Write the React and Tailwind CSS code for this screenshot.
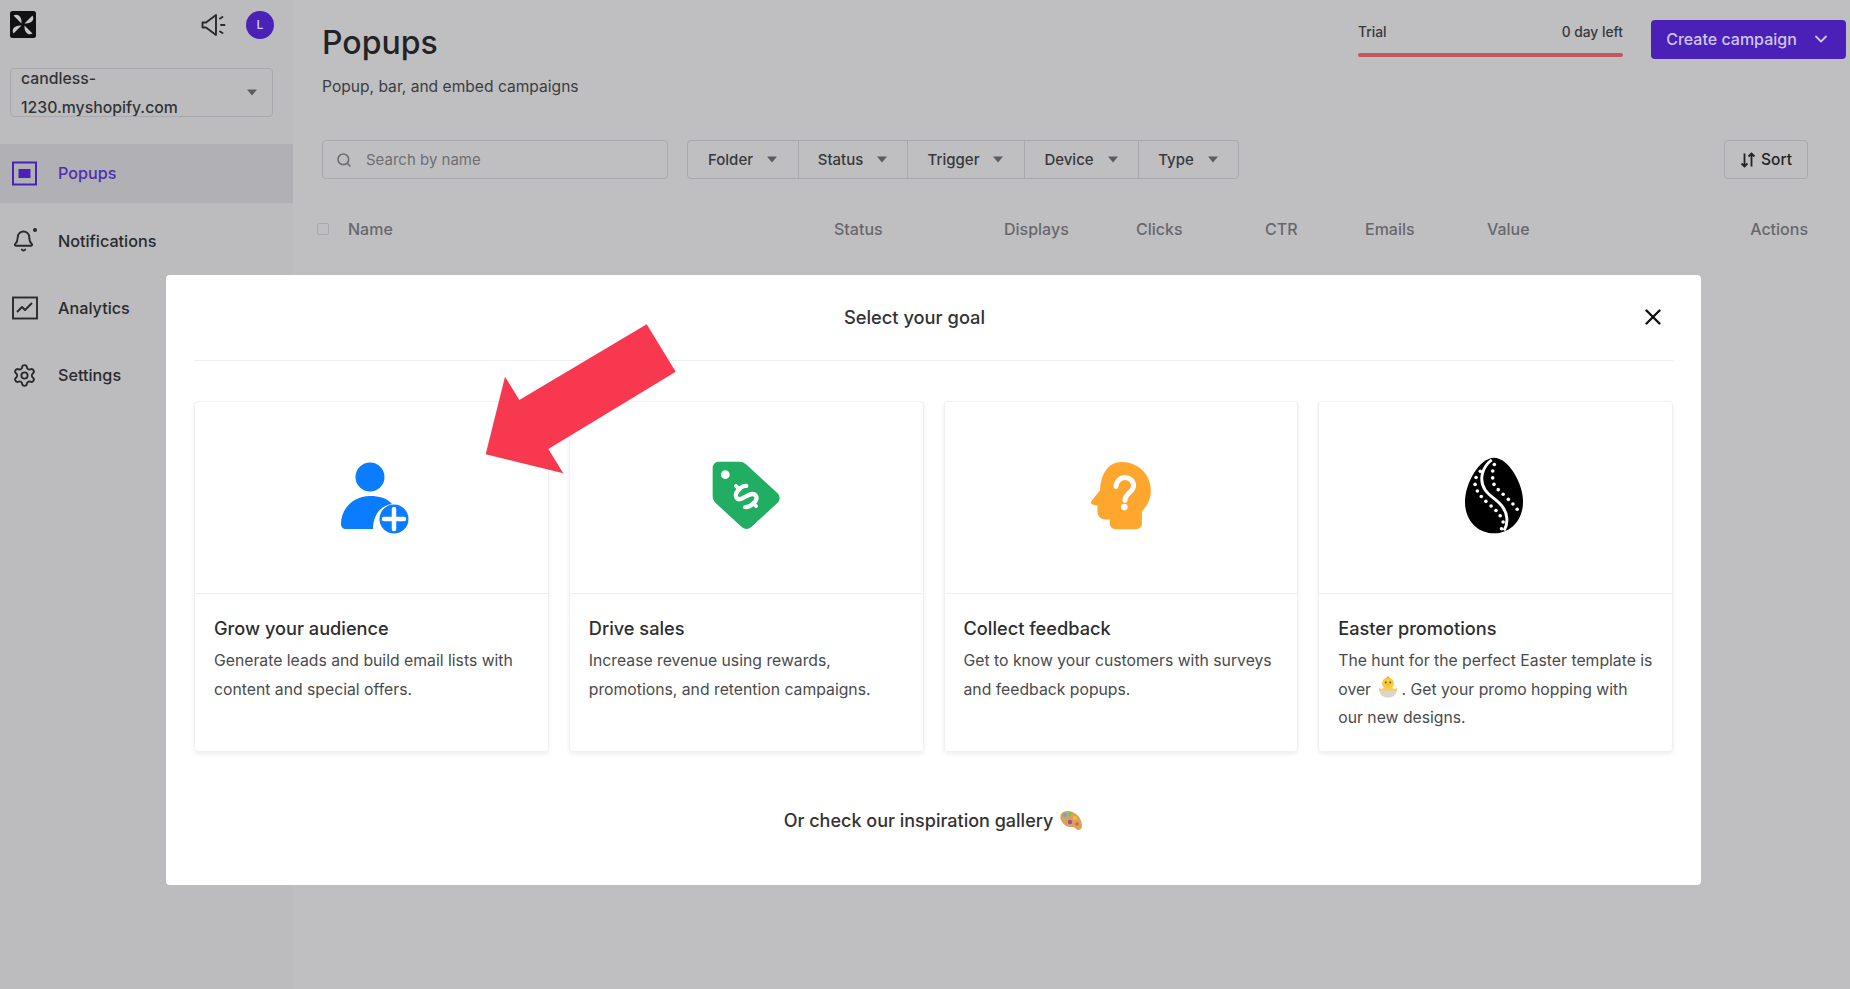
import React from "react";
import { Search, X, ChevronDown, Settings, Bell } from "lucide-react";

const filters = [
  { label: "Folder", width: "w-[110px]" },
  { label: "Status", width: "w-[109px]" },
  { label: "Trigger", width: "w-[117px]" },
  { label: "Device", width: "w-[114px]" },
  { label: "Type", width: "w-[100px]" },
];

const columns = ["Name", "Status", "Displays", "Clicks", "CTR", "Emails", "Value"];

function Caret({ className }) {
  return (
    <svg viewBox="0 0 12 7" className={className}>
      <path d="M1 .5h10L6 6.5z" fill="currentColor" />
    </svg>
  );
}

function Logo() {
  return (
    <svg viewBox="0 0 26 27" className="h-[27px] w-[26px]">
      <rect width="26" height="27" rx="2.5" fill="#111114" />
      <g fill="#c8c8ca">
        <path d="M11.500 12.500 3.500 4.500c4-2.500 8.500 1 8 8z" />
        <path d="M14.500 12.500l8-8c2.500 4-1 8.500-8 8z" />
        <path d="M11.500 14.500l-8 8c-2.500-4 1-8.500 8-8z" />
        <path d="M14.500 14.500l8 8c-4 2.500-8.500-1-8-8z" />
      </g>
    </svg>
  );
}

function Speaker() {
  return (
    <svg viewBox="0 0 26 24" className="h-[24px] w-[26px]" fill="none" stroke="#2a2a2d" strokeWidth="1.9">
      <path d="M1.500 9.500v5h3.500L15 22V2L5 9.500z" strokeLinejoin="round" />
      <path d="M19 5.500l2.500-1.500M20 12h3.500M19 18.500l2.500 1.500" strokeLinecap="round" />
    </svg>
  );
}

function PopupsIcon() {
  return (
    <svg viewBox="0 0 25 25" className="h-[25px] w-[25px]" fill="none">
      <rect x="1" y="1.500" width="23" height="22" stroke="#4a22b8" strokeWidth="2" />
      <rect x="6.500" y="8" width="12" height="9" fill="#4a22b8" />
    </svg>
  );
}

function AnalyticsIcon() {
  return (
    <svg viewBox="0 0 26 24" className="h-[24px] w-[26px]" fill="none" stroke="#2a2a2d" strokeWidth="1.900">
      <rect x="1" y="1.500" width="24" height="21" />
      <path d="M5 16l5-5 3 3 7-7" strokeLinejoin="round" />
    </svg>
  );
}

function PersonIcon() {
  return (
    <svg viewBox="0 0 70 73" className="ml-[8px] mt-[2px] h-[73px] w-[70px]">
      <circle cx="30" cy="15" r="14.500" fill="#0a7cff" />
      <path d="M1 62c0-16 13-28 29-28 9 0 17 2 22 8-11 1-19 11-19 25H6c-3 0-5-2-5-5z" fill="#0a7cff" />
      <circle cx="54" cy="57" r="14.500" fill="#0a7cff" />
      <path d="M54 47v20M44 57h20" stroke="#fff" strokeWidth="4.500" strokeLinecap="round" />
    </svg>
  );
}

function TagIcon() {
  return (
    <svg viewBox="95 92 204 204" className="-mt-[5px] h-[68px] w-[68px]">
      <path d="M115 94h62c8 0 14 2 20 8l94 86c9 9 9 22 0 30l-78 72c-9 8-20 8-29 0l-78-72c-6-6-9-12-9-20V112c0-10 8-18 18-18z" fill="#21ad62" />
      <circle cx="135" cy="133" r="13" fill="#fff" />
      <g transform="rotate(-45 197 197)" fill="none" stroke="#fff" strokeWidth="13" strokeLinecap="round">
        <path d="M219 176c-8-11-44-12-46 6-2 19 48 12 46 34-2 17-37 15-47 3" />
        <path d="M197 154v10M197 230v10" strokeWidth="11" />
      </g>
    </svg>
  );
}

function HeadIcon() {
  return (
    <svg viewBox="92 90 186 208" className="-mt-[4px] h-[69px] w-[62px]">
      <path d="M187 93c50 0 88 38 88 86 0 28-12 47-27 63v36c0 11-8 18-18 18h-61c-10 0-18-8-18-18v-12h-13c-14 0-24-10-24-24v-18c-9 0-15-2-18-5-3-4-1-8 3-12l23-29c2-52 26-85 65-85z" fill="#ffa62e" />
      <path d="M170 167c0-15 12-27 27-27 14 0 26 10 26 24 0 21-26 22-26 45" fill="none" stroke="#fff" strokeWidth="15" strokeLinecap="round" />
      <circle cx="195" cy="229" r="10" fill="#fff" />
    </svg>
  );
}

function EggIcon() {
  const dots = [
    [195, 101], [190, 121], [190, 142], [194, 162], [207, 178], [222, 192], [238, 208], [252, 222], [265, 238],
    [152, 122], [139, 141], [136, 162], [143, 182], [155, 199], [169, 214], [185, 228], [200, 242], [213, 258], [222, 277], [217, 298],
  ];
  return (
    <svg viewBox="103 78 182 236" className="-ml-[3px] -mt-[4px] h-[77px] w-[60px]">
      <path d="M194 80c44 0 89 78 89 135 0 58-40 97-89 97-50 0-89-39-89-97 0-57 45-135 89-135z" fill="#000" />
      <path d="M187 87c-30 22-40 62-20 92 12 18 36 30 52 50 16 21 20 50 6 74" fill="none" stroke="#fff" strokeWidth="9" />
      {dots.map(([x, y]) => (
        <circle key={`${x}-${y}`} cx={x} cy={y} r="5.500" fill="#fff" />
      ))}
    </svg>
  );
}

function ChickEmoji() {
  return (
    <svg viewBox="0 0 22 24" className="mx-[3px] inline-block h-[22px] w-[20px] align-[-3px]">
      <circle cx="11" cy="8" r="6.500" fill="#fbc93a" />
      <path d="M9 2l2-2 2 2z" fill="#f5a623" />
      <circle cx="8.500" cy="7" r="1" fill="#5b4a20" />
      <circle cx="13.500" cy="7" r="1" fill="#5b4a20" />
      <path d="M10 9h2l-1 1.500z" fill="#ef8a1d" />
      <path d="M1 13l3 1.500 3-2 4 2 4-2 3 2 3-1.500c0 7-4 10.500-10 10.500S1 20 1 13z" fill="#d8d6ce" />
      <path d="M1 13l3 1.500 3-2 4 2 4-2 3 2 3-1.500-.5 3H1.500z" fill="#f4cf5f" />
    </svg>
  );
}

function PaletteEmoji() {
  return (
    <svg viewBox="0 0 24 22" className="ml-[6px] inline-block h-[22px] w-[24px] align-[-3px]">
      <path d="M2 4c3-4 10-4 15 0 4 3 6 8 6 12 0 4-4 5-6 3-1-2-3-2-5-2-4 0-7-2-9-5C1 9 1 6 2 4z" fill="#d9a15a" />
      <circle cx="6" cy="5" r="2" fill="#4fb3d9" />
      <circle cx="11" cy="4" r="2" fill="#7cc35a" />
      <circle cx="16" cy="8" r="2" fill="#e8c23a" />
      <circle cx="11" cy="12" r="2.200" fill="#a04aa0" />
      <circle cx="18" cy="14" r="1.800" fill="#e0603c" />
    </svg>
  );
}

const goals = [
  {
    title: "Grow your audience",
    icon: <PersonIcon />,
    text: "Generate leads and build email lists with content and special offers.",
  },
  {
    title: "Drive sales",
    icon: <TagIcon />,
    text: "Increase revenue using rewards, promotions, and retention campaigns.",
  },
  {
    title: "Collect feedback",
    icon: <HeadIcon />,
    text: "Get to know your customers with surveys and feedback popups.",
  },
  {
    title: "Easter promotions",
    icon: <EggIcon />,
    text: (
      <>
        The hunt for the perfect Easter template is over <ChickEmoji />. Get your promo hopping with our new designs.
      </>
    ),
  },
];

export default function App() {
  return (
    <div className="relative flex h-screen overflow-hidden bg-[#bfbfc2] font-['Inter',sans-serif] text-[#2a2a2d]">
      {/* Sidebar */}
      <aside className="w-[293px] shrink-0 bg-[#bcbcbf]">
        <div className="flex h-[48px] items-center pl-[10px] pr-[19px] pt-[1px]">
          <Logo />
          <div className="ml-auto mr-[19px]">
            <Speaker />
          </div>
          <div className="flex h-[28px] w-[28px] items-center justify-center rounded-full bg-[#4a22b8] text-[12px] font-medium text-[#d5ccec]">
            L
          </div>
        </div>
        <div className="relative mx-[10px] mt-[20px] h-[49px] w-[263px] overflow-hidden rounded-[4px] border border-[#a9a9ad] pl-[10px] pr-[40px] text-[15.800px] font-medium leading-[29px] text-[#333336]">
          <div className="-mt-[5px]">candless-<br />1230.myshopify.com</div>
          <Caret className="absolute right-[14px] top-[20px] h-[7px] w-[12px] text-[#5c5c60]" />
        </div>
        <nav className="mt-[27px] text-[16.200px] font-medium">
          <div className="flex h-[59px] items-center gap-[21px] bg-[#b1b1b5] pl-[12px] text-[#4f2fb0]">
            <PopupsIcon />
            Popups
          </div>
          <div className="mt-[9px] flex h-[58px] items-center gap-[21px] pl-[12px]">
            <div className="relative w-[25px]">
              <Bell className="h-[26px] w-[23px]" strokeWidth={2} />
              <span className="absolute right-0 top-0 h-[4px] w-[4px] rounded-full bg-[#2a2a2d]" />
            </div>
            Notifications
          </div>
          <div className="mt-[9px] flex h-[58px] items-center gap-[20px] pl-[12px]">
            <AnalyticsIcon />
            Analytics
          </div>
          <div className="mt-[9px] flex h-[58px] items-center gap-[21px] pl-[12px]">
            <Settings className="h-[25px] w-[25px]" strokeWidth={1.8} />
            Settings
          </div>
        </nav>
      </aside>

      {/* Main */}
      <main className="min-w-0 flex-1 pl-[29px]">
        <div className="flex items-start justify-between pr-[4px]">
          <div className="pt-[23px]">
            <h1 className="text-[32px] font-medium leading-[40px] text-[#232326]">Popups</h1>
            <p className="mt-[12px] text-[15.600px] leading-[24px] text-[#3d3d40]">Popup, bar, and embed campaigns</p>
          </div>
          <div className="flex items-start pt-[20px]">
            <div className="w-[265px]">
              <div className="flex justify-between text-[13.800px] font-medium leading-[24px] text-[#38383b]">
                <span>Trial</span>
                <span>0 day left</span>
              </div>
              <div className="mt-[9px] h-[4px] rounded-full bg-[#c4575a]" />
            </div>
            <button className="ml-[28px] flex h-[39px] w-[195px] items-center justify-center gap-[14px] rounded-[4px] bg-[#4a20b8] pb-[2px] text-[16px] font-medium text-[#cfc6ea]">
              Create campaign
              <ChevronDown className="h-[20px] w-[20px]" strokeWidth={2.200} />
            </button>
          </div>
        </div>

        <div className="mt-[41px] flex items-center pr-[42px]">
          <div className="flex h-[39px] w-[346px] items-center gap-[14px] rounded-[4px] border border-[#a9a9ad] pl-[13px] text-[15px] text-[#6e6e72]">
            <Search className="h-[16px] w-[16px]" strokeWidth={2.400} />
            <span className="pt-[2px]">Search by name</span>
          </div>
          <div className="ml-[19px] flex h-[39px] rounded-[4px] border border-[#a9a9ad]">
            {filters.map((f, i) => (
              <div
                key={f.label}
                className={`${f.width} flex items-center justify-center gap-[13px] text-[15px] font-medium text-[#38383b] ${i > 0 ? "border-l border-[#a9a9ad]" : ""}`}
              >
                <span className="pt-[2px]">{f.label}</span>
                <Caret className="h-[7px] w-[12px] text-[#5c5c60]" />
              </div>
            ))}
          </div>
          <button className="ml-auto flex h-[39px] w-[84px] items-center justify-center gap-[5px] rounded-[4px] border border-[#a9a9ad] text-[15.500px] font-medium text-[#232326]">
            <svg viewBox="0 0 16 16" className="h-[16px] w-[16px]" fill="none" stroke="#232326" strokeWidth="1.800">
              <path d="M4.500 1.500v13M1.500 11.500l3 3 3-3M11.500 14.500v-13M8.500 4.500l3-3 3 3" />
            </svg>
            <span className="pt-[1px]">Sort</span>
          </button>
        </div>

        <div className="-ml-[5px] mt-[38px] grid grid-cols-[31px_486px_170px_132px_129px_100px_122px_1fr_auto] items-center pr-[42px] text-[16px] font-medium leading-[24px] text-[#68686c]">
          <span className="h-[12px] w-[12px] rounded-[2px] border border-[#a9a9ad]" />
          {columns.map((c) => (
            <span key={c}>{c}</span>
          ))}
          <span className="text-right">Actions</span>
        </div>
      </main>

      {/* Goal modal */}
      <div className="absolute left-[166px] top-[275px] w-[1535px] rounded-[4px] bg-white px-[28px] pb-[50px] text-[#333336]">
        <div className="relative flex h-[86px] items-center justify-center border-b border-[#eeeeef] pr-[38px] text-[18.300px] font-medium">
          Select your goal
          <X className="absolute right-[7px] top-[29px] h-[26px] w-[26px] text-[#111114]" strokeWidth={2.200} />
        </div>
        <div className="mt-[40px] grid grid-cols-4 gap-[20px]">
          {goals.map((g) => (
            <div key={g.title} className="h-[351px] rounded-[4px] border border-[#f0f0f1] shadow-[0_2px_4px_rgba(0,0,0,0.07)]">
              <div className="flex h-[192px] items-center justify-center border-b border-[#eeeeef]">{g.icon}</div>
              <div className="px-[19px] pt-[21px]">
                <h3 className="text-[18.200px] font-medium leading-[26px] text-[#2e2e31]">{g.title}</h3>
                <p className="mt-[6px] text-[15.750px] leading-[28.500px] text-[#4a4a4d]">{g.text}</p>
              </div>
            </div>
          ))}
        </div>
        <div className="mt-[55px] flex items-center justify-center text-[18px] font-medium leading-[28px]">
          Or check our inspiration gallery
          <PaletteEmoji />
        </div>
      </div>

      {/* Red arrow annotation */}
      <svg viewBox="0 0 200 160" className="absolute left-[483px] top-[322px] h-[160px] w-[200px]">
        <polygon points="163.700,2.300 192.700,49.700 65.300,127 80.300,151.300 2.700,132.300 22,54.700 36.300,78" fill="#f7384f" />
      </svg>
    </div>
  );
}
